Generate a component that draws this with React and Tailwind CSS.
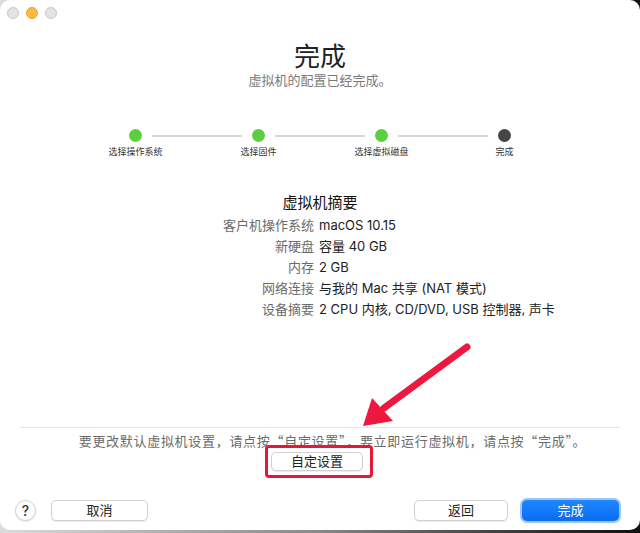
import React from "react";

const font = { fontFamily: '"Inter", "Noto Sans CJK SC", sans-serif' };
const cjkFont = { fontFamily: '"Noto Sans CJK SC", "Inter", sans-serif' };

function Step({ color }) {
  return <div className={`h-[13px] w-[13px] shrink-0 rounded-full ${color}`} />;
}

function Label({ children }) {
  return (
    <div className="flex w-[13px] shrink-0 justify-center">
      <span className="whitespace-nowrap text-[9px] leading-[11px] text-[#333]">{children}</span>
    </div>
  );
}

const rows = [
  ["客户机操作系统", "macOS 10.15"],
  ["新硬盘", "容量 40 GB"],
  ["内存", "2 GB"],
  ["网络连接", "与我的 Mac 共享 (NAT 模式)"],
  ["设备摘要", "2 CPU 内核, CD/DVD, USB 控制器, 声卡"],
];

export default function App() {
  return (
    <div
      className="relative h-[533px] w-[640px] overflow-hidden bg-gradient-to-r from-[#dcdcdc] via-[#888] to-[#111]"
      style={font}
    >
      <div className="flex h-[530px] w-[640px] flex-col rounded-[10px] bg-white">
        {/* traffic lights */}
        <div className="flex gap-[7px] pl-[7px] pt-[7px]">
          <div className="h-[12px] w-[12px] rounded-full border border-[#c9c9c9] bg-[#e3e3e3]" />
          <div className="h-[12px] w-[12px] rounded-full border border-[#e5a33a] bg-[#feb940]" />
          <div className="h-[12px] w-[12px] rounded-full border border-[#c9c9c9] bg-[#e3e3e3]" />
        </div>

        <div className="mt-[23px] text-center text-[26px] leading-[30px] text-[#222]">完成</div>
        <div className="text-center text-[13px] leading-[16px] text-[#7a7a7a]">虚拟机的配置已经完成。</div>

        {/* stepper */}
        <div className="mx-auto mt-[41px] flex w-[382px] items-center">
          <Step color="bg-[#5bcf3f]" />
          <div className="mx-[10px] h-[2px] flex-1 bg-[#d6d6d6]" />
          <Step color="bg-[#5bcf3f]" />
          <div className="mx-[10px] h-[2px] flex-1 bg-[#d6d6d6]" />
          <Step color="bg-[#5bcf3f]" />
          <div className="mx-[10px] h-[2px] flex-1 bg-[#d6d6d6]" />
          <Step color="bg-[#454545]" />
        </div>
        <div className="mx-auto mt-[4px] flex w-[382px] justify-between">
          <Label>选择操作系统</Label>
          <Label>选择固件</Label>
          <Label>选择虚拟磁盘</Label>
          <Label>完成</Label>
        </div>

        {/* summary */}
        <div className="mt-[36px] text-center text-[15px] leading-[20px] text-[#111]">虚拟机摘要</div>
        <div className="mt-[2px] grid grid-cols-[314px_1fr] gap-x-[5px] text-[13px] leading-[21px]">
          {rows.map(([k, v]) => (
            <React.Fragment key={k}>
              <div className="text-right text-[#6b6b6b]">{k}</div>
              <div className="text-[#222]">{v}</div>
            </React.Fragment>
          ))}
        </div>

        <div className="flex-1" />

        <div className="mx-[20px] h-px bg-[#e6e6e6]" />
        <div className="mt-[5px] pl-[25px] text-center text-[13px] leading-[16px] tracking-[0.7px] text-[#6b6b6b]" style={cjkFont}>
          要更改默认虚拟机设置，请点按“自定设置”，要立即运行虚拟机，请点按“完成”。
        </div>
        <div className="mt-[3px] flex justify-center pr-[6px]">
          <div className="relative">
            <button className="block h-[19px] w-[92px] rounded-[5px] border border-[#d0d0d0] bg-white text-[13px] leading-[17px] text-[#222] shadow-[0_1px_1px_rgba(0,0,0,0.08)]">
              自定设置
            </button>
            <div className="pointer-events-none absolute -bottom-[7px] -left-[6px] -right-[10px] -top-[7px] rounded-[4px] border-[3px] border-[#e8173a]" />
          </div>
        </div>

        {/* bottom buttons */}
        <div className="mb-[7px] mt-[27px] flex h-[25px] items-center pl-[15px] pr-[19px]">
          <div className="flex h-[21px] w-[21px] items-center justify-center rounded-full border border-[#cfcfcf] bg-white text-[14px] font-medium leading-none text-[#333] shadow-[0_1px_1px_rgba(0,0,0,0.1)]">
            ?
          </div>
          <button className="ml-[15px] block h-[21px] w-[97px] rounded-[5px] border border-[#d0d0d0] bg-white text-[13px] text-[#222] shadow-[0_1px_1px_rgba(0,0,0,0.08)]">
            取消
          </button>
          <div className="flex-1" />
          <button className="block h-[21px] w-[94px] rounded-[5px] border border-[#d0d0d0] bg-white text-[13px] text-[#222] shadow-[0_1px_1px_rgba(0,0,0,0.08)]">
            返回
          </button>
          <div className="ml-[12px] rounded-[7px] bg-[#9ec5f8] p-[2px]">
            <button className="block h-[21px] w-[97px] rounded-[5px] bg-gradient-to-b from-[#1f87ff] to-[#0a6cf0] text-[13px] text-white">
              完成
            </button>
          </div>
        </div>
      </div>

      {/* red annotation arrow */}
      <svg className="pointer-events-none absolute left-0 top-0" width="640" height="533">
        <line x1="467" y1="347" x2="384" y2="408" stroke="#ee1740" strokeWidth="7" strokeLinecap="round" />
        <polygon points="363,426 372,398 393,421" fill="#ee1740" />
      </svg>
    </div>
  );
}
